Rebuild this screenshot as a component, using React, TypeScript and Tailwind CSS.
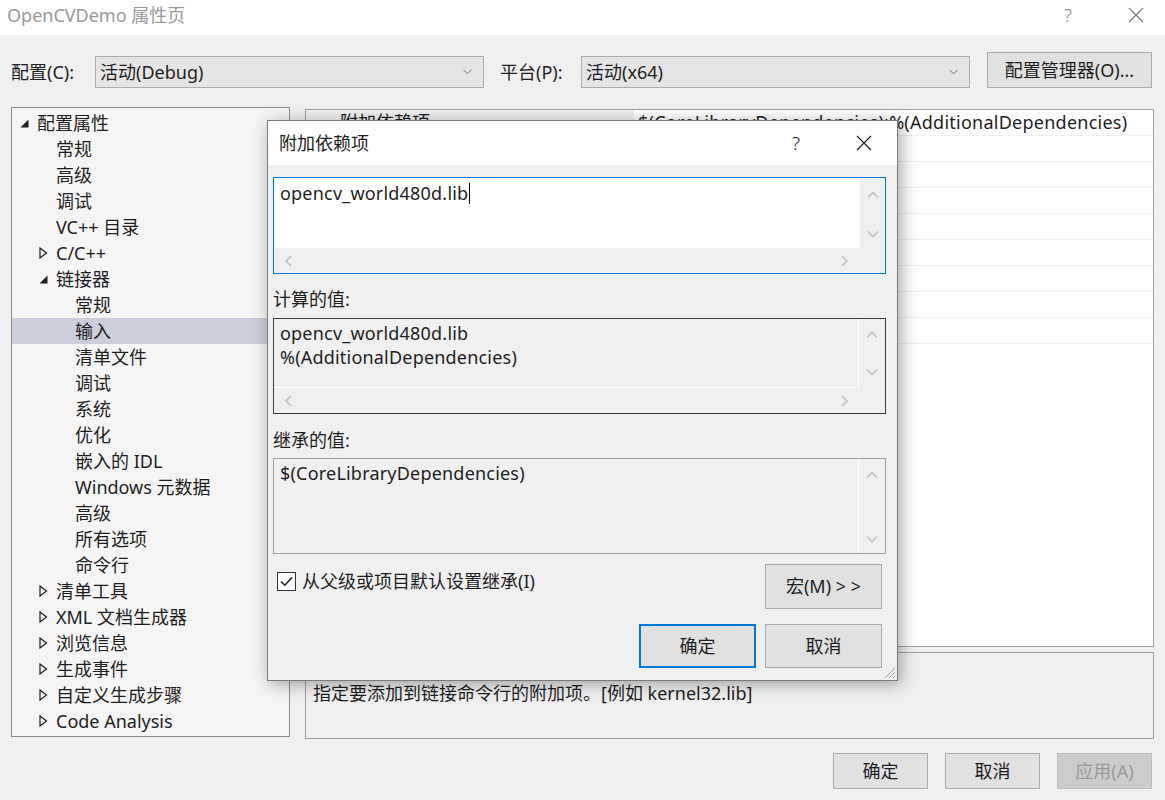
import React from 'react';

type Dir = 'up' | 'down' | 'left' | 'right';

function Arrow({ dir, color = '#c2c2c2' }: { dir: Dir; color?: string }) {
  const vert = dir === 'up' || dir === 'down';
  const d = {
    up: 'M1 7.5 L6 2.5 L11 7.5',
    down: 'M1 1.5 L6 6.5 L11 1.5',
    left: 'M7 1 L2 6 L7 11',
    right: 'M2 1 L7 6 L2 11',
  }[dir];
  return (
    <svg width={vert ? 12 : 9} height={vert ? 9 : 12} viewBox={vert ? '0 0 12 9' : '0 0 9 12'}>
      <path d={d} fill="none" stroke={color} strokeWidth="1.7" />
    </svg>
  );
}

function Select({ value, className }: { value: string; className: string }) {
  return (
    <div className={`flex h-[32px] items-center justify-between border border-[#adadad] bg-[#e5e5e5] pl-[4px] pr-[11px] ${className}`}>
      <span className="leading-[30px]">{value}</span>
      <svg width="9" height="6" viewBox="0 0 9 6">
        <path d="M0.5 0.8 L4.5 4.8 L8.5 0.8" fill="none" stroke="#707070" strokeWidth="1" />
      </svg>
    </div>
  );
}

function Expanded() {
  return (
    <svg width="9" height="9" viewBox="0 0 9 9">
      <path d="M8.5 0.5 L8.5 8.5 L0.5 8.5 Z" fill="#1e1e1e" />
    </svg>
  );
}

function Collapsed() {
  return (
    <svg width="9" height="12" viewBox="0 0 9 12">
      <path d="M1 1 L7.5 6 L1 11 Z" fill="none" stroke="#1e1e1e" strokeWidth="1.2" />
    </svg>
  );
}

const tree: { t: string; l: 0 | 1 | 2; s?: 'open' | 'closed'; sel?: boolean }[] = [
  { t: '配置属性', l: 0, s: 'open' },
  { t: '常规', l: 1 },
  { t: '高级', l: 1 },
  { t: '调试', l: 1 },
  { t: 'VC++ 目录', l: 1 },
  { t: 'C/C++', l: 1, s: 'closed' },
  { t: '链接器', l: 1, s: 'open' },
  { t: '常规', l: 2 },
  { t: '输入', l: 2, sel: true },
  { t: '清单文件', l: 2 },
  { t: '调试', l: 2 },
  { t: '系统', l: 2 },
  { t: '优化', l: 2 },
  { t: '嵌入的 IDL', l: 2 },
  { t: 'Windows 元数据', l: 2 },
  { t: '高级', l: 2 },
  { t: '所有选项', l: 2 },
  { t: '命令行', l: 2 },
  { t: '清单工具', l: 1, s: 'closed' },
  { t: 'XML 文档生成器', l: 1, s: 'closed' },
  { t: '浏览信息', l: 1, s: 'closed' },
  { t: '生成事件', l: 1, s: 'closed' },
  { t: '自定义生成步骤', l: 1, s: 'closed' },
  { t: 'Code Analysis', l: 1, s: 'closed' },
];

const indent = ['pl-[6px]', 'pl-[25px]', 'pl-[44px]'];

// only the first row peeks out from under the dialog
const props: [string, string][] = [
  ['附加依赖项', '$(CoreLibraryDependencies);%(AdditionalDependencies)'],
  ['', ''],
  ['', ''],
  ['', ''],
  ['', ''],
  ['', ''],
  ['', ''],
  ['', ''],
  ['', ''],
];

function CloseX({ color, size = 16 }: { color: string; size?: number }) {
  return (
    <svg width={size} height={size} viewBox="0 0 16 16">
      <path d="M1 1 L15 15 M15 1 L1 15" stroke={color} strokeWidth="1.2" />
    </svg>
  );
}

function Button({ label, className = '' }: { label: string; className?: string }) {
  return (
    <div className={`flex items-center justify-center bg-[#e1e1e1] ${className}`}>
      {label}
    </div>
  );
}

function Dialog() {
  return (
    <div className="absolute left-[267px] top-[120px] flex h-[561px] w-[631px] flex-col border border-[#7a7a7a] bg-[#f0f0f0] shadow-[3px_3px_16px_rgba(0,0,0,0.35)]">
      <div className="flex h-[44px] shrink-0 items-center justify-between bg-white pl-[11px] pr-[25px]">
        <span>附加依赖项</span>
        <div className="flex items-center gap-[56px]">
          <span className="text-[19px] font-light">?</span>
          <CloseX color="#1e1e1e" />
        </div>
      </div>

      <div className="flex flex-col pl-[5px]">
        <div className="mt-[12px] flex h-[97px] w-[613px] flex-col border border-[#0078d7]">
          <div className="flex h-[70px]">
            <div className="flex flex-1 items-start bg-white pl-[6px] pt-[2px] leading-[26px] tracking-[0.2px]">
              <span>opencv_world480d.lib</span>
              <span className="ml-[1px] mt-[3px] h-[21px] w-[1px] bg-black" />
            </div>
            <div className="flex w-[25px] flex-col items-center justify-between pb-[9px] pt-[12px]">
              <Arrow dir="up" />
              <Arrow dir="down" />
            </div>
          </div>
          <div className="flex flex-1 items-center justify-between pl-[10px] pr-[36px]">
            <Arrow dir="left" />
            <Arrow dir="right" />
          </div>
        </div>

        <div className="mt-[12px] leading-[26px]">计算的值:</div>
        <div className="mt-[6px] flex h-[96px] w-[613px] flex-col border border-[#3c3c3c]">
          <div className="flex h-[69px]">
            <div className="flex-1 border-b border-r border-white pl-[6px] pt-[2px] leading-[24px] tracking-[0.2px]">
              <div>opencv_world480d.lib</div>
              <div>%(AdditionalDependencies)</div>
            </div>
            <div className="flex w-[26px] flex-col items-center justify-between pb-[11px] pt-[11px]">
              <Arrow dir="up" />
              <Arrow dir="down" />
            </div>
          </div>
          <div className="flex flex-1 items-center justify-between pl-[10px] pr-[36px]">
            <Arrow dir="left" />
            <Arrow dir="right" />
          </div>
        </div>

        <div className="mt-[13px] leading-[26px]">继承的值:</div>
        <div className="mt-[5px] flex h-[96px] w-[613px] border border-[#a0a0a0]">
          <div className="flex-1 border-r border-white pl-[6px] pt-[1px] leading-[26px] tracking-[0.2px]">
            $(CoreLibraryDependencies)
          </div>
          <div className="flex w-[26px] flex-col items-center justify-between pb-[9px] pt-[11px]">
            <Arrow dir="up" />
            <Arrow dir="down" />
          </div>
        </div>

        <div className="mt-[10px] flex w-[613px] items-start justify-between pr-[4px]">
          <div className="mt-[4px] flex h-[26px] items-center gap-[6px] pl-[4px]">
            <div className="flex h-[19px] w-[19px] items-center justify-center border border-[#333333] bg-white">
              <svg width="13" height="11" viewBox="0 0 13 11">
                <path d="M1 5.5 L4.8 9.2 L12 1.5" fill="none" stroke="#1e1e1e" strokeWidth="1.6" />
              </svg>
            </div>
            <span>从父级或项目默认设置继承(I)</span>
          </div>
          <Button label="宏(M) > >" className="h-[45px] w-[117px] border border-[#adadad]" />
        </div>

        <div className="mt-[15px] flex w-[613px] justify-end gap-[9px] pr-[4px]">
          <Button label="确定" className="h-[44px] w-[117px] border-2 border-[#0078d7]" />
          <Button label="取消" className="h-[44px] w-[117px] border border-[#adadad]" />
        </div>
      </div>

      <svg className="absolute bottom-[1px] right-[1px]" width="13" height="13" viewBox="0 0 13 13">
        <path d="M12 2 L2 12 M12 6 L6 12 M12 10 L10 12" stroke="#a0a0a0" strokeWidth="1" />
      </svg>
    </div>
  );
}

export default function App() {
  return (
    <div className="relative h-[800px] w-[1165px] overflow-hidden bg-[#f0f0f0] font-['Noto_Sans','Noto_Sans_CJK_SC',sans-serif] text-[18px] text-[#1e1e1e]">
      <div className="flex h-[35px] items-start justify-between bg-white">
        <span className="pl-[7px] leading-[30px] text-[#999999]">OpenCVDemo 属性页</span>
        <div className="flex h-[30px] items-center gap-[56px] pr-[21px]">
          <span className="text-[19px] font-light text-[#8a8a8a]">?</span>
          <CloseX color="#7a7a7a" />
        </div>
      </div>

      <div className="mt-[17px] flex h-[36px] items-end pl-[11px]">
        <div className="flex h-[32px] w-[84px] items-center">配置(C):</div>
        <Select value="活动(Debug)" className="w-[389px]" />
        <div className="ml-[16px] flex h-[32px] w-[81px] items-center">平台(P):</div>
        <Select value="活动(x64)" className="w-[389px]" />
        <Button label="配置管理器(O)..." className="ml-[17px] h-[36px] w-[165px] border border-[#adadad]" />
      </div>

      <div className="mt-[19px] flex items-start pl-[11px]">
        <div className="h-[630px] w-[279px] border border-[#8c8c8c] bg-[#f5f5f5] pt-[2px]">
          {tree.map((n, i) => (
            <div
              key={i}
              className={`flex h-[26px] items-center ${indent[n.l]} ${n.sel ? 'bg-[#cccedb]' : ''}`}
            >
              <div className="flex w-[19px] items-center justify-start pl-[2px]">
                {n.s === 'open' && <Expanded />}
                {n.s === 'closed' && <Collapsed />}
              </div>
              <span className="whitespace-nowrap leading-[26px]">{n.t}</span>
            </div>
          ))}
        </div>

        <div className="ml-[15px] mt-[2px] flex h-[630px] w-[849px] flex-col gap-[5px]">
          <div className="h-[538px] border border-[#a0a0a0] bg-white">
            {props.map(([name, value], i) => (
              <div key={i} className="flex h-[26px] border-b border-[#f0f0f5]">
                <div className={`w-[328px] whitespace-nowrap pl-[34px] leading-[25px] ${i === 0 ? 'bg-[#f0f0f0]' : ''}`}>
                  {name}
                </div>
                <div className="flex-1 whitespace-nowrap pl-[4px] leading-[25px] tracking-[0.25px]">{value}</div>
              </div>
            ))}
          </div>
          <div className="flex-1 border border-[#a0a0a0] pl-[7px] pt-[27px] leading-[26px]">
            指定要添加到链接命令行的附加项。[例如 kernel32.lib]
          </div>
        </div>
      </div>

      <div className="mt-[14px] flex justify-end gap-[17px] pr-[13px]">
        <Button label="确定" className="h-[36px] w-[95px] border border-[#adadad]" />
        <Button label="取消" className="h-[36px] w-[95px] border border-[#adadad]" />
        <div className="flex h-[36px] w-[95px] items-center justify-center border border-[#bfbfbf] bg-[#cccccc] text-[#9a9a9a]">
          应用(A)
        </div>
      </div>

      <Dialog />
    </div>
  );
}
